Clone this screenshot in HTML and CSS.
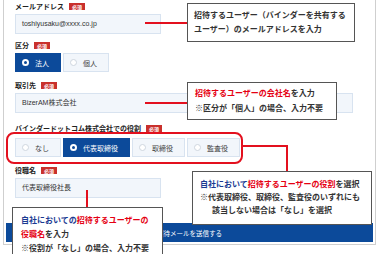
FILE: index.html
```html
<!DOCTYPE html>
<html lang="ja">
<head>
    <meta charset="UTF-8">
    <meta name="viewport" content="width=device-width, initial-scale=1.0">
    <title>ユーザー招待</title>
    <link rel="stylesheet" href="styles.css">
</head>
<body>
<div class="page">
    <div class="panel">
        <div class="fields">
            <div class="field">
                <div class="label">メールアドレス<span class="req">必須</span></div>
                <div class="input short">toshiyusaku@xxxx.co.jp</div>
            </div>
            <div class="field kind">
                <div class="label">区分<span class="req">必須</span></div>
                <div class="choices">
                    <div class="choice on"><span class="dot"></span>法人</div>
                    <div class="choice"><span class="dot"></span>個人</div>
                </div>
            </div>
            <div class="field client">
                <div class="label">取引先<span class="req">必須</span></div>
                <div class="input wide">BizerAM株式会社</div>
            </div>
            <div class="field role">
                <div class="label">バインダードットコム株式会社での役割<span class="req">必須</span></div>
                <div class="choices">
                    <div class="choice"><span class="dot"></span>なし</div>
                    <div class="choice on"><span class="dot"></span>代表取締役</div>
                    <div class="choice"><span class="dot"></span>取締役</div>
                    <div class="choice"><span class="dot"></span>監査役</div>
                </div>
            </div>
            <div class="field title">
                <div class="label">役職名<span class="req">必須</span></div>
                <div class="input short">代表取締役社長</div>
            </div>
        </div>
        <div class="submit">招待メールを送信する</div>
    </div>

    <!-- annotations -->
    <div class="frame-role"></div>
    <div class="mark mark-mail"></div>
    <div class="mark mark-client"></div>
    <div class="mark mark-role-h"></div>
    <div class="mark mark-role-v"></div>
    <div class="mark mark-title"></div>

    <div class="note note-mail">
        <div>招待するユーザー（バインダーを共有する</div>
        <div>ユーザー）のメールアドレスを入力</div>
    </div>
    <div class="note note-client">
        <div><span class="red">招待するユーザーの会社名</span>を入力</div>
        <div>※区分が「個人」の場合、入力不要</div>
    </div>
    <div class="note note-role">
        <div><span class="navy">自社において</span><span class="red">招待するユーザーの役割</span>を選択</div>
        <div>※代表取締役、取締役、監査役のいずれにも</div>
        <div class="indent">該当しない場合は「なし」を選択</div>
    </div>
    <div class="note note-title">
        <div><span class="navy">自社においての</span><span class="red">招待するユーザーの</span></div>
        <div><span class="red">役職名</span>を入力</div>
        <div>※役割が「なし」の場合、入力不要</div>
    </div>
</div>
</body>
</html>
```

FILE: styles.css
```css
body {
    margin: 0;
    background-color: white;
    color: #333;
    font-family: "Noto Sans CJK JP", sans-serif;
}
.page {
    position: relative;
    width: 380px;
    height: 254px;
    overflow: hidden;
}
.panel {
    margin-left: 3px;
    width: 373px;
    box-sizing: border-box;
    border: 1px solid #cfcfcf;
    border-top: none;
    padding: 1px 2px 2px;
}
.fields {
    padding-left: 9px;
}
.label {
    display: flex;
    align-items: center;
    gap: 5px;
    height: 10px;
    margin-bottom: 3px;
    font-size: 7px;
    line-height: 10px;
    font-weight: bold;
    color: #222;
}
.req {
    height: 7px;
    padding: 0 3px;
    background-color: #c9302c;
    color: white;
    font-size: 5px;
    line-height: 7px;
}
.field.kind {
    margin-top: 6px;
}
.field.client {
    margin-top: 8px;
}
.field.role {
    margin-top: 10px;
}
.field.role .label {
    margin-bottom: 5px;
}
.field.title {
    margin-top: 8px;
}
.input {
    height: 20px;
    box-sizing: border-box;
    border: 1px solid #d8e3f0;
    background-color: #f2f6fb;
    padding: 0 6px;
    font-family: "Liberation Sans", "Noto Sans CJK JP", sans-serif;
    font-size: 7px;
    line-height: 18px;
    color: #333;
}
.input.short {
    width: 146px;
}
.input.wide {
    width: 338px;
}
.choices {
    display: flex;
    gap: 2px;
}
.choice {
    display: flex;
    align-items: center;
    height: 19px;
    box-sizing: border-box;
    padding: 0 11px 0 6px;
    border: 1px solid #d8e3f0;
    background-color: #f2f6fb;
    font-size: 7px;
    color: #444;
}
.dot {
    width: 7px;
    height: 7px;
    box-sizing: border-box;
    margin-right: 6px;
    border: 1px solid #cfd6df;
    border-radius: 50%;
    background-color: white;
}
.choice.on {
    background-color: #0c4a9a;
    border-color: #0c4a9a;
    color: white;
}
.choice.on .dot {
    border: 2px solid white;
    background-color: #0c4a9a;
}
.submit {
    display: flex;
    align-items: center;
    justify-content: center;
    height: 19px;
    margin-top: 25px;
    background-color: #0c4a9a;
    color: white;
    font-size: 6.5px;
}

/* annotations */
.frame-role {
    position: absolute;
    left: 6px;
    top: 132px;
    width: 237px;
    height: 32px;
    box-sizing: border-box;
    border: 2px solid #e3101e;
    border-radius: 8px;
}
.mark {
    position: absolute;
    background-color: #e3101e;
}
.mark-mail {
    left: 145px;
    top: 22px;
    width: 42px;
    height: 2px;
}
.mark-client {
    left: 145px;
    top: 102px;
    width: 42px;
    height: 2px;
}
.mark-role-h {
    left: 243px;
    top: 145px;
    width: 45px;
    height: 2px;
}
.mark-role-v {
    left: 286px;
    top: 145px;
    width: 2px;
    height: 26px;
}
.mark-title {
    left: 86px;
    top: 190px;
    width: 2px;
    height: 17px;
}
.note {
    position: absolute;
    box-sizing: border-box;
    border: 1px solid #555;
    background-color: white;
    font-size: 8px;
    font-weight: bold;
    color: #333;
    white-space: nowrap;
}
.note-mail {
    left: 187px;
    top: 3px;
    width: 168px;
    height: 39px;
    padding: 4px 0 0 6px;
    line-height: 14px;
}
.note-client {
    left: 187px;
    top: 82px;
    width: 150px;
    height: 38px;
    padding: 2px 0 0 7px;
    line-height: 15px;
}
.note-role {
    left: 192px;
    top: 171px;
    width: 180px;
    height: 54px;
    padding: 5px 0 0 7px;
    line-height: 13px;
}
.note-role .indent {
    padding-left: 12px;
}
.note-title {
    left: 12px;
    top: 207px;
    width: 151px;
    height: 60px;
    padding: 5px 0 0 8px;
    line-height: 14px;
}
.red {
    color: #e50012;
}
.navy {
    color: #1b3a92;
}
```
